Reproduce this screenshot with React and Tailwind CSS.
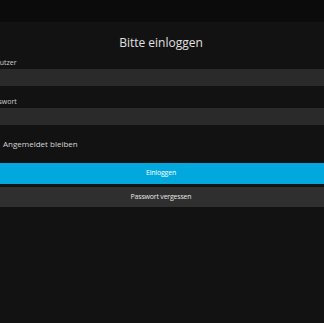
export default function App() {
  return (
    <div
      className="w-[324px] h-[323px] overflow-hidden bg-[#121212] text-[#d6d6d6]"
      style={{ fontFamily: '"Open Sans", "Noto Sans", sans-serif' }}
    >
      <div className="h-[22px] bg-[#0b0b0b]" />

      {/* form is wider than the window and spills past its left edge */}
      <div className="ml-[-13px] w-[348px] flex flex-col">
        <h1 className="mt-[13px] h-[16px] text-center text-[12px] leading-[16px] text-[#e0e0e0]">
          Bitte einloggen
        </h1>

        <div className="mt-[7px] h-[10px] text-[7px] leading-[10px] text-[#d0d0d0]">Benutzer</div>
        <input type="text" className="mt-[1px] h-[17px] w-full bg-[#2a2a2a] outline-none" />

        <div className="mt-[11px] h-[10px] text-[7px] leading-[10px] text-[#d0d0d0]">Passwort</div>
        <input type="password" className="mt-[1px] h-[17px] w-full bg-[#2a2a2a] outline-none" />

        <div className="mt-[14px] h-[10px] flex items-center gap-[6px] text-[8px] leading-[10px] text-[#d6d6d6]">
          <span className="w-[10px] h-[10px] shrink-0 border border-[#777]" />
          <span>Angemeldet bleiben</span>
        </div>

        <div className="mt-[14px] flex flex-col gap-[3px]">
          <button className="h-[21px] bg-[#00a8de] text-[7px] tracking-[-0.2px] text-white">Einloggen</button>
          <button className="h-[20px] bg-[#2f2f2f] text-[7px] tracking-[-0.2px] text-[#e6e6e6]">Passwort vergessen</button>
        </div>
      </div>
    </div>
  );
}
